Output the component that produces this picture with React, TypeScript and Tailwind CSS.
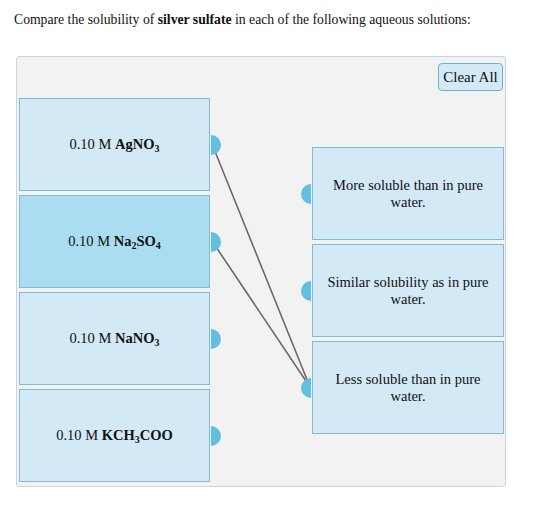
import React from 'react';

type Solution = { id: string; prefix: string; formula: React.ReactNode; active?: boolean };

const solutions: Solution[] = [
  { id: 'agno3', prefix: '0.10 M ', formula: <>AgNO<sub>3</sub></> },
  { id: 'na2so4', prefix: '0.10 M ', formula: <>Na<sub>2</sub>SO<sub>4</sub></>, active: true },
  { id: 'nano3', prefix: '0.10 M ', formula: <>NaNO<sub>3</sub></> },
  { id: 'kch3coo', prefix: '0.10 M ', formula: <>KCH<sub>3</sub>COO</> },
];

const targets = [
  'More soluble than in pure water.',
  'Similar solubility as in pure water.',
  'Less soluble than in pure water.',
];

// pairs drawn between connector centres, in panel coordinates
const links = [
  { x1: 195, y1: 87, x2: 293, y2: 330 },
  { x1: 195, y1: 184, x2: 293, y2: 330 },
];

export default function App() {
  return (
    <div
      className="w-[560px] h-[507px] bg-white text-[#111]"
      style={{ fontFamily: '"Liberation Serif", "Times New Roman", serif' }}
    >
      <p className="pt-[10px] pl-[14px] text-[13.7px] leading-[20px]">
        Compare the solubility of <b>silver sulfate</b> in each of the following aqueous solutions:
      </p>

      <div className="relative mt-[26px] ml-[16px] w-[490px] h-[431px] bg-[#f2f2f2] border border-[#c9d4dc] rounded-[3px] pt-[6px] pl-[2px] pr-[1px]">
        <svg className="absolute left-0 top-0 w-full h-full pointer-events-none" viewBox="0 0 488 429">
          {links.map((l, i) => (
            <line key={i} {...l} stroke="#6b6b6b" strokeWidth="1.6" strokeLinecap="round" />
          ))}
        </svg>

        <div className="flex justify-end pr-[1px]">
          <button className="relative h-[28px] w-[65px] rounded-[4px] border border-[#6cb2d1] bg-[#d3e9f6] text-[15px] text-[#111]">
            Clear All
          </button>
        </div>

        <div className="flex justify-between mt-[7px]">
          <div className="flex flex-col gap-[4px]">
            {solutions.map((s) => (
              <div
                key={s.id}
                className={`relative w-[191px] h-[93px] border border-[#7dbbd7] flex items-center justify-center text-[14.5px] ${
                  s.active ? 'bg-[#abddf1]' : 'bg-[#d3e9f6]'
                }`}
              >
                <span>
                  {s.prefix}
                  <b className="[&_sub]:text-[10px] [&_sub]:-bottom-[3px]">{s.formula}</b>
                </span>
                <span className="absolute -right-[12px] top-1/2 -translate-y-1/2 w-[10px] h-[20px] rounded-r-full bg-[#63bfe0]" />
              </div>
            ))}
          </div>

          <div className="flex flex-col gap-[4px] mt-[49px]">
            {targets.map((t) => (
              <div
                key={t}
                className="relative w-[192px] h-[93px] border border-[#7dbbd7] bg-[#d3e9f6] flex items-center justify-center text-center px-[11px] text-[14.5px] leading-[17px]"
              >
                <span>{t}</span>
                <span className="absolute -left-[12px] top-1/2 -translate-y-1/2 w-[10px] h-[20px] rounded-l-full bg-[#63bfe0]" />
              </div>
            ))}
          </div>
        </div>
      </div>
    </div>
  );
}
